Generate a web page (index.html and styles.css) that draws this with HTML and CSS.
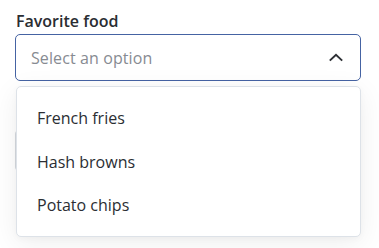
FILE: index.html
```html
<!DOCTYPE html>
<html>
<head>
<meta charset="utf-8">
<link rel="stylesheet" href="styles.css">
</head>
<body>
<div class="form">
  <div class="field">
    <label class="label">Favorite food</label>
    <div class="select">
      <span class="placeholder">Select an option</span>
      <svg class="chevron" width="14" height="9" viewBox="0 0 14 9"><path d="M1.5 7 L7 1.8 L12.5 7" fill="none" stroke="#2d3035" stroke-width="1.9" stroke-linecap="square"/></svg>
    </div>
    <div class="behind"></div>
    <ul class="menu">
      <li class="item">French fries</li>
      <li class="item">Hash browns</li>
      <li class="item">Potato chips</li>
    </ul>
  </div>
</div>
</body>
</html>
```
FILE: styles.css
```css
html, body {
  margin: 0;
  padding: 0;
  background: #ffffff;
}
body {
  font-family: "Open Sans", "Noto Sans", sans-serif;
  color: #2b2e33;
  min-height: 248px;
}
.form {
  padding: 10px 18px 0 15px;
  min-height: 238px;
}
.field {
  position: relative;
}
.label {
  display: block;
  font-size: 16px;
  font-weight: 600;
  line-height: 22px;
  color: #2a2d32;
  padding-left: 1px;
  margin-bottom: 2px;
}
.select {
  box-sizing: border-box;
  height: 47px;
  border: 1.5px solid #4563a3;
  border-radius: 5px;
  display: flex;
  align-items: center;
  justify-content: space-between;
  padding: 0 17px 0 15px;
  background: #fff;
}
.placeholder {
  font-size: 16px;
  color: #878b92;
  letter-spacing: 0.1px;
}
.chevron {
  display: block;
}
.behind {
  margin-top: 48px;
  height: 41px;
  border: 1px solid #d5d9de;
  border-radius: 5px;
}
.menu {
  position: absolute;
  top: 76px;
  left: 1px;
  right: 0;
  margin: 0;
  padding: 10px 0 8px;
  list-style: none;
  background: #fff;
  border: 1px solid #dde2e8;
  border-radius: 5px;
  box-shadow: 0 6px 28px rgba(0, 0, 0, 0.07), 0 2px 6px rgba(0, 0, 0, 0.03);
}
.item {
  font-size: 16px;
  line-height: 23.5px;
  padding: 10px 20px;
  color: #2b2e33;
}
```
